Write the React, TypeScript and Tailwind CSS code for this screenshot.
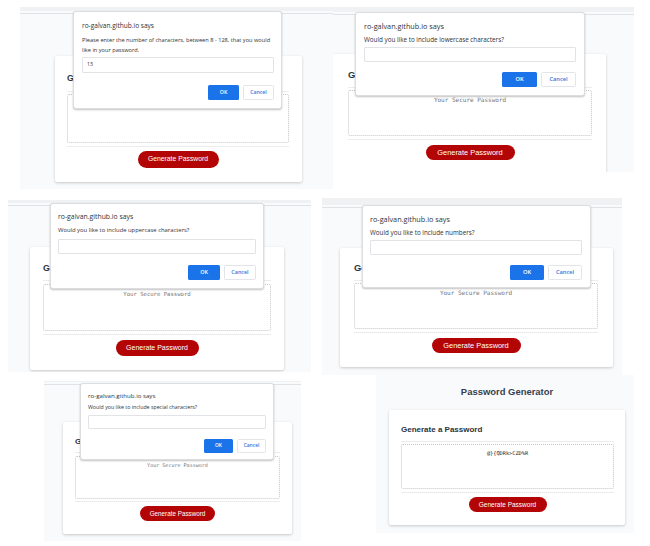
type Dialog = {
  box: string;
  title: string;
  text: string;
  message: string;
  input: string;
  value?: string;
  actions: string;
  button: string;
};

type Shot = {
  panel: string;
  strip?: string;
  pageTitle?: string;
  card: string;
  heading: string;
  ruleTop: string;
  area: string;
  areaText?: string;
  ruleBottom: string;
  button: string;
  dialog?: Dialog;
};

const row1: Shot[] = [
  {
    panel: "w-[313px] h-[182px]",
    strip: "h-[4px]",
    card: "mt-[42px] ml-[35px] w-[247px] h-[126px] pl-[12px] pr-[13px] pt-[15px]",
    heading: "text-[8.7px]",
    ruleTop: "mt-[6px]",
    area: "mt-[2px] h-[49px]",
    ruleBottom: "mt-[3px]",
    button: "mt-[4px] h-[17px] w-[81px] text-[6.8px]",
    dialog: {
      box: "left-[54px] top-[5px] w-[207px] h-[96px] pl-[8px] pr-[7px] pt-[9px]",
      title: "h-[10px] leading-[10px] text-[6.55px]",
      text: "mt-[4px] leading-[10px] text-[5.65px]",
      message: "Please enter the number of characters, between 8 - 128, that you would\nlike in your password.",
      input: "mt-[2px] h-[16px]",
      value: "13",
      actions: "mt-[12px] gap-[4px]",
      button: "w-[31px] h-[15px] text-[5.2px]",
    },
  },
  {
    panel: "w-[301px] h-[165px]",
    strip: "h-[5px]",
    card: "mt-[39px] ml-0 w-[273px] h-[130px] pl-[15px] pr-[14px] pt-[14px]",
    heading: "text-[9.4px]",
    ruleTop: "mt-[5px]",
    area: "mt-[2px] h-[46px] pt-[5px] text-[6px] text-[#757575]",
    areaText: "Your Secure Password",
    ruleBottom: "mt-[3px]",
    button: "mt-[5px] h-[15px] w-[89px] text-[7.4px]",
    dialog: {
      box: "left-[23px] top-[6px] w-[228px] h-[82px] px-[8px] pt-[8px]",
      title: "h-[10px] leading-[10px] text-[7.28px]",
      text: "mt-[4px] leading-[9px] text-[6.3px]",
      message: "Would you like to include lowercase characters?",
      input: "mt-[3px] h-[15px]",
      actions: "mt-[10px] gap-[4px]",
      button: "w-[35px] h-[15px] text-[5.7px]",
    },
  },
];

const row2: Shot[] = [
  {
    panel: "w-[303px] h-[172px] mt-[2px]",
    strip: "h-[3px]",
    card: "mt-[41px] ml-[22px] w-[254px] h-[123px] px-[13px] pt-[14px]",
    heading: "text-[8.9px]",
    ruleTop: "mt-[5px]",
    area: "mt-[3px] h-[47px] pt-[5px] text-[5.6px] text-[#757575]",
    areaText: "Your Secure Password",
    ruleBottom: "mt-[3px]",
    button: "mt-[5px] h-[16px] w-[83px] text-[7px]",
    dialog: {
      box: "left-[43px] top-[4px] w-[212px] h-[84px] px-[7px] pt-[8px]",
      title: "h-[10px] leading-[10px] text-[6.85px]",
      text: "mt-[4px] leading-[9px] text-[5.87px]",
      message: "Would you like to include uppercase characters?",
      input: "mt-[4px] h-[15px]",
      actions: "mt-[11px] gap-[4px]",
      button: "w-[32px] h-[15px] text-[5.4px]",
    },
  },
  {
    panel: "w-[300px] h-[177px] ml-[11px]",
    strip: "h-[7px]",
    card: "mt-[40px] ml-[18px] w-[273px] h-[119px] pl-[14px] pr-[15px] pt-[13px]",
    heading: "text-[9.4px]",
    ruleTop: "mt-[5px]",
    area: "mt-[2px] h-[46px] pt-[5px] text-[6px] text-[#757575]",
    areaText: "Your Secure Password",
    ruleBottom: "mt-[3px]",
    button: "mt-[5px] h-[15px] w-[89px] text-[7.4px]",
    dialog: {
      box: "left-[41px] top-[8px] w-[227px] h-[81px] pl-[7px] pr-[8px] pt-[8px]",
      title: "h-[10px] leading-[10px] text-[7.28px]",
      text: "mt-[4px] leading-[9px] text-[6.3px]",
      message: "Would you like to include numbers?",
      input: "mt-[3px] h-[15px]",
      actions: "mt-[10px] gap-[4px]",
      button: "w-[34px] h-[15px] text-[5.7px]",
    },
  },
];

const row3: Shot[] = [
  {
    panel: "w-[257px] h-[160px] mt-[6px]",
    strip: "h-[1px]",
    card: "mt-[37px] ml-[19px] w-[229px] h-[112px] px-[12px] pt-[13px]",
    heading: "text-[8px]",
    ruleTop: "mt-[3px]",
    area: "mt-[3px] h-[43px] pt-[4px] text-[5.05px] text-[#757575]",
    areaText: "Your Secure Password",
    ruleBottom: "mt-[2px]",
    button: "mt-[4px] h-[15px] w-[75px] text-[6.3px]",
    dialog: {
      box: "left-[37px] top-[3px] w-[192px] h-[75px] px-[7px] pt-[7px]",
      title: "h-[10px] leading-[10px] text-[6.13px]",
      text: "mt-[2px] leading-[9px] text-[5.27px]",
      message: "Would you like to include special characters?",
      input: "mt-[3px] h-[14px]",
      actions: "mt-[10px] gap-[4px]",
      button: "w-[29px] h-[14px] text-[4.9px]",
    },
  },
  {
    panel: "w-[258px] h-[158px] ml-[75px]",
    pageTitle: "Password Generator",
    card: "mt-[11px] ml-[13px] w-[236px] h-[115px] pl-[12px] pr-[11px] pt-[13px]",
    heading: "text-[8px]",
    ruleTop: "mt-[4px]",
    area: "mt-[2px] h-[45px] pt-[4px] text-[5.25px] text-[#222222]",
    areaText: "@}{QDRk>CZD%R",
    ruleBottom: "mt-[3px]",
    button: "mt-[4px] h-[15px] w-[78px] text-[6.5px]",
  },
];

function PromptDialog({ d }: { d: Dialog }) {
  return (
    <div
      className={`absolute rounded-[2px] bg-white font-['Open_Sans','Noto_Sans',sans-serif] text-[#2f3236] shadow-[0_0_0_1px_#dcdddf,0_1px_2px_1px_rgba(0,0,0,0.24)] ${d.box}`}
    >
      <div className={`whitespace-nowrap ${d.title}`}>ro-galvan.github.io says</div>
      <div className={`whitespace-pre ${d.text}`}>{d.message}</div>
      <div className={`flex items-center rounded-[1px] border border-[#e1e3e6] pl-[4px] text-[5.2px] ${d.input}`}>
        {d.value}
      </div>
      <div className={`flex justify-end font-semibold ${d.actions}`}>
        <div className={`flex items-center justify-center rounded-[1.5px] bg-[#1a73e8] text-white ${d.button}`}>OK</div>
        <div className={`flex items-center justify-center rounded-[1.5px] border border-[#e3e5e8] text-[#3474dc] ${d.button}`}>
          Cancel
        </div>
      </div>
    </div>
  );
}

function Screenshot({ s }: { s: Shot }) {
  return (
    <section className={`relative shrink-0 overflow-hidden bg-[#f9fafc] ${s.panel}`}>
      {s.strip && (
        <>
          <div className={`bg-[#f0f1f2] ${s.strip}`} />
          <div className="mt-[2px] h-px bg-[#e0e2e5]" />
        </>
      )}
      {s.pageTitle && (
        <h1 className="mt-[10px] h-[14px] pl-[4px] text-center text-[9.45px] leading-[14px] font-bold text-[#36414f]">
          {s.pageTitle}
        </h1>
      )}
      <div className={`rounded-[2px] bg-white shadow-[0_1px_3px_rgba(0,0,0,0.2)] ${s.card}`}>
        <h2 className={`h-[14px] leading-[14px] font-bold whitespace-nowrap text-[#2a3440] ${s.heading}`}>
          Generate a Password
        </h2>
        <div className={`h-px bg-[#ebecee] ${s.ruleTop}`} />
        <div
          className={`rounded-[2px] border border-dotted border-[#c4c6c8] text-center font-['DejaVu_Sans_Mono','Liberation_Mono',monospace] leading-[8px] ${s.area}`}
        >
          {s.areaText}
        </div>
        <div className={`h-px bg-[#ebecee] ${s.ruleBottom}`} />
        <div className={`mx-auto flex items-center justify-center rounded-full bg-[#b30506] text-white ${s.button}`}>
          Generate Password
        </div>
      </div>
      {s.dialog && <PromptDialog d={s.dialog} />}
    </section>
  );
}

export default function App() {
  return (
    <main className="h-[546px] w-[650px] overflow-hidden bg-white pt-[7px] font-['Liberation_Sans',Arial,sans-serif]">
      <div className="flex h-[191px] items-start pl-[20px]">
        {row1.map((s, i) => (
          <Screenshot key={i} s={s} />
        ))}
      </div>
      <div className="flex h-[177px] items-start pl-[8px]">
        {row2.map((s, i) => (
          <Screenshot key={i} s={s} />
        ))}
      </div>
      <div className="flex items-start pl-[44px]">
        {row3.map((s, i) => (
          <Screenshot key={i} s={s} />
        ))}
      </div>
    </main>
  );
}
